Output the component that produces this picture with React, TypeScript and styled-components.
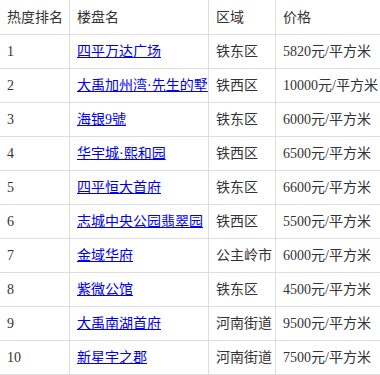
import React from "react";
import styled, { createGlobalStyle } from "styled-components";

const Global = createGlobalStyle`
  html, body { margin: 0; padding: 0; background: #fff; }
  body { font-family: "Liberation Serif", "Noto Sans CJK SC", serif; overflow: hidden; }
`;

const Wrap = styled.div`
  width: 380px;
  height: 375px;
  overflow: hidden;
`;

const Table = styled.table`
  border-collapse: collapse;
  table-layout: fixed;
  width: 420px;
  margin: -1px 0 0 -1px;
  font-size: 14px;
  color: #333;
`;

const Cell = styled.td`
  border: 1px solid #ddd;
  padding: 6px 6px 6px 7px;
  line-height: 21px;
  text-align: left;
  white-space: nowrap;
  overflow: hidden;
  vertical-align: middle;
`;

const Head = styled(Cell).attrs({ as: "th" })`
  font-weight: normal;
  padding-top: 7px;
`;

const Link = styled.a`
  color: #0000ee;
  text-decoration: underline;
`;

const rows = [
  ["1", "四平万达广场", "铁东区", "5820元/平方米"],
  ["2", "大禹加州湾·先生的墅", "铁西区", "10000元/平方米"],
  ["3", "海银9號", "铁东区", "6000元/平方米"],
  ["4", "华宇城·熙和园", "铁西区", "6500元/平方米"],
  ["5", "四平恒大首府", "铁东区", "6600元/平方米"],
  ["6", "志城中央公园翡翠园", "铁西区", "5500元/平方米"],
  ["7", "金域华府", "公主岭市", "6000元/平方米"],
  ["8", "紫微公馆", "铁东区", "4500元/平方米"],
  ["9", "大禹南湖首府", "河南街道", "9500元/平方米"],
  ["10", "新星宇之郡", "河南街道", "7500元/平方米"],
];

export default function App() {
  return (
    <Wrap>
      <Global />
      <Table>
        <colgroup>
          <col style={{ width: 70 }} />
          <col style={{ width: 139 }} />
          <col style={{ width: 67 }} />
          <col />
        </colgroup>
        <thead>
          <tr>
            <Head>热度排名</Head>
            <Head>楼盘名</Head>
            <Head>区域</Head>
            <Head>价格</Head>
          </tr>
        </thead>
        <tbody>
          {rows.map((r) => (
            <tr key={r[0]}>
              <Cell>{r[0]}</Cell>
              <Cell>
                <Link href="#">{r[1]}</Link>
              </Cell>
              <Cell>{r[2]}</Cell>
              <Cell>{r[3]}</Cell>
            </tr>
          ))}
        </tbody>
      </Table>
    </Wrap>
  );
}
